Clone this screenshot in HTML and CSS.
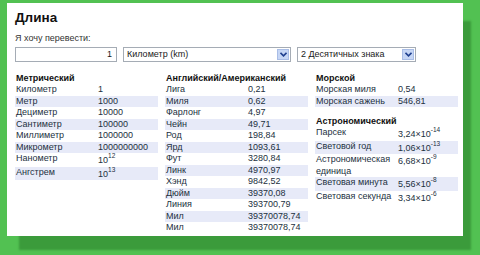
FILE: index.html
```html
<!DOCTYPE html>
<html lang="ru">
<head>
  <meta charset="UTF-8">
  <title>Длина</title>
  <link rel="stylesheet" href="styles.css">
</head>
<body>
  <div class="panel">
    <h1>Длина</h1>
    <div class="label">Я хочу перевести:</div>
    <div class="controls">
      <div class="amount">1</div>
      <div class="select unit">
        <span>Километр (km)</span>
        <span class="arrow"><svg width="7" height="5" viewBox="0 0 7 5"><path d="M0.5 0.8 L3.5 3.8 L6.5 0.8" fill="none" stroke="#1f3f8f" stroke-width="1.6"/></svg></span>
      </div>
      <div class="select prec">
        <span>2 Десятичных знака</span>
        <span class="arrow"><svg width="7" height="5" viewBox="0 0 7 5"><path d="M0.5 0.8 L3.5 3.8 L6.5 0.8" fill="none" stroke="#1f3f8f" stroke-width="1.6"/></svg></span>
      </div>
    </div>

    <div class="columns">
      <div class="col">
        <table class="units">
          <tr><th colspan="2">Метрический</th></tr>
          <tr><td class="name">Километр</td><td>1</td></tr>
          <tr class="alt"><td class="name">Метр</td><td>1000</td></tr>
          <tr><td class="name">Дециметр</td><td>10000</td></tr>
          <tr class="alt"><td class="name">Сантиметр</td><td>100000</td></tr>
          <tr><td class="name">Миллиметр</td><td>1000000</td></tr>
          <tr class="alt"><td class="name">Микрометр</td><td>1000000000</td></tr>
          <tr><td class="name">Нанометр</td><td>10<sup>12</sup></td></tr>
          <tr class="alt"><td class="name">Ангстрем</td><td>10<sup>13</sup></td></tr>
        </table>
      </div>

      <div class="col">
        <table class="units">
          <tr><th colspan="2">Английский/Американский</th></tr>
          <tr><td class="name">Лига</td><td>0,21</td></tr>
          <tr class="alt"><td class="name">Миля</td><td>0,62</td></tr>
          <tr><td class="name">Фарлонг</td><td>4,97</td></tr>
          <tr class="alt"><td class="name">Чейн</td><td>49,71</td></tr>
          <tr><td class="name">Род</td><td>198,84</td></tr>
          <tr class="alt"><td class="name">Ярд</td><td>1093,61</td></tr>
          <tr><td class="name">Фут</td><td>3280,84</td></tr>
          <tr class="alt"><td class="name">Линк</td><td>4970,97</td></tr>
          <tr><td class="name">Хэнд</td><td>9842,52</td></tr>
          <tr class="alt"><td class="name">Дюйм</td><td>39370,08</td></tr>
          <tr><td class="name">Линия</td><td>393700,79</td></tr>
          <tr class="alt"><td class="name">Мил</td><td>39370078,74</td></tr>
          <tr><td class="name">Мил</td><td>39370078,74</td></tr>
        </table>
      </div>

      <div class="col">
        <table class="units">
          <tr><th colspan="2">Морской</th></tr>
          <tr><td class="name">Морская миля</td><td>0,54</td></tr>
          <tr class="alt"><td class="name">Морская сажень</td><td>546,81</td></tr>
        </table>
        <table class="units astro">
          <tr><th colspan="2">Астрономический</th></tr>
          <tr><td class="name">Парсек</td><td>3,24×10<sup>-14</sup></td></tr>
          <tr class="alt"><td class="name">Световой год</td><td>1,06×10<sup>-13</sup></td></tr>
          <tr><td class="name">Астрономическая единица</td><td>6,68×10<sup>-9</sup></td></tr>
          <tr class="alt"><td class="name">Световая минута</td><td>5,56×10<sup>-8</sup></td></tr>
          <tr><td class="name">Световая секунда</td><td>3,34×10<sup>-6</sup></td></tr>
        </table>
      </div>
    </div>
  </div>
</body>
</html>
```

FILE: styles.css
```css
/* ─── Base ─── */
body {
  margin: 0;
  padding: 3px 0 0 7px;
  height: 255px;
  box-sizing: border-box;
  background: #52c152;
  font-family: 'Liberation Sans', Arial, sans-serif;
  color: #1a1a1a;
  overflow: hidden;
}
.panel {
  width: 456px; height: 233px;
  box-sizing: border-box;
  background: #fff;
  padding: 6px 5px 0 8px;
  box-shadow: 10px 16px 2px -2px #3b9b3b;
}
h1 { font-size: 13.5px; font-weight: bold; margin: 0; line-height: 18px; color: #111; }
.label { font-size: 9px; margin-top: 6px; line-height: 11px; color: #333; }

/* ─── Controls ─── */
.controls { display: flex; gap: 6px; margin-top: 3px; height: 15px; }
.amount, .select {
  box-sizing: border-box; height: 15px;
  border: 1px solid #a5acb5; background: #fff;
  font-size: 9px; line-height: 13px;
}
.amount { width: 102px; text-align: right; padding-right: 4px; }
.select { display: flex; justify-content: space-between; padding-left: 3px; }
.select.unit { width: 168px; }
.select.prec { width: 119px; }
.select .arrow {
  width: 12px; margin: 1px; background: #c6d6f5;
  border: 1px solid #a9bde6; box-sizing: border-box;
  display: flex; align-items: center; justify-content: center;
}

/* ─── Tables ─── */
.columns { display: flex; gap: 7px; margin-top: 10px; }
.col { width: 143px; }
table.units { width: 100%; border-collapse: collapse; font-size: 9px; }
.units th { text-align: left; font-weight: bold; padding: 0 0 0 1px; line-height: 12px; color: #111; }
.units td { padding: 0 0 0 1px; line-height: 11.5px; vertical-align: top; color: #22303e; }
.units td.name { width: 81px; }
.units tr.alt td { background: #e7eaf8; }
.units sup { font-size: 6.5px; line-height: 6px; vertical-align: 5px; }
.astro { margin-top: 8px; }
```
